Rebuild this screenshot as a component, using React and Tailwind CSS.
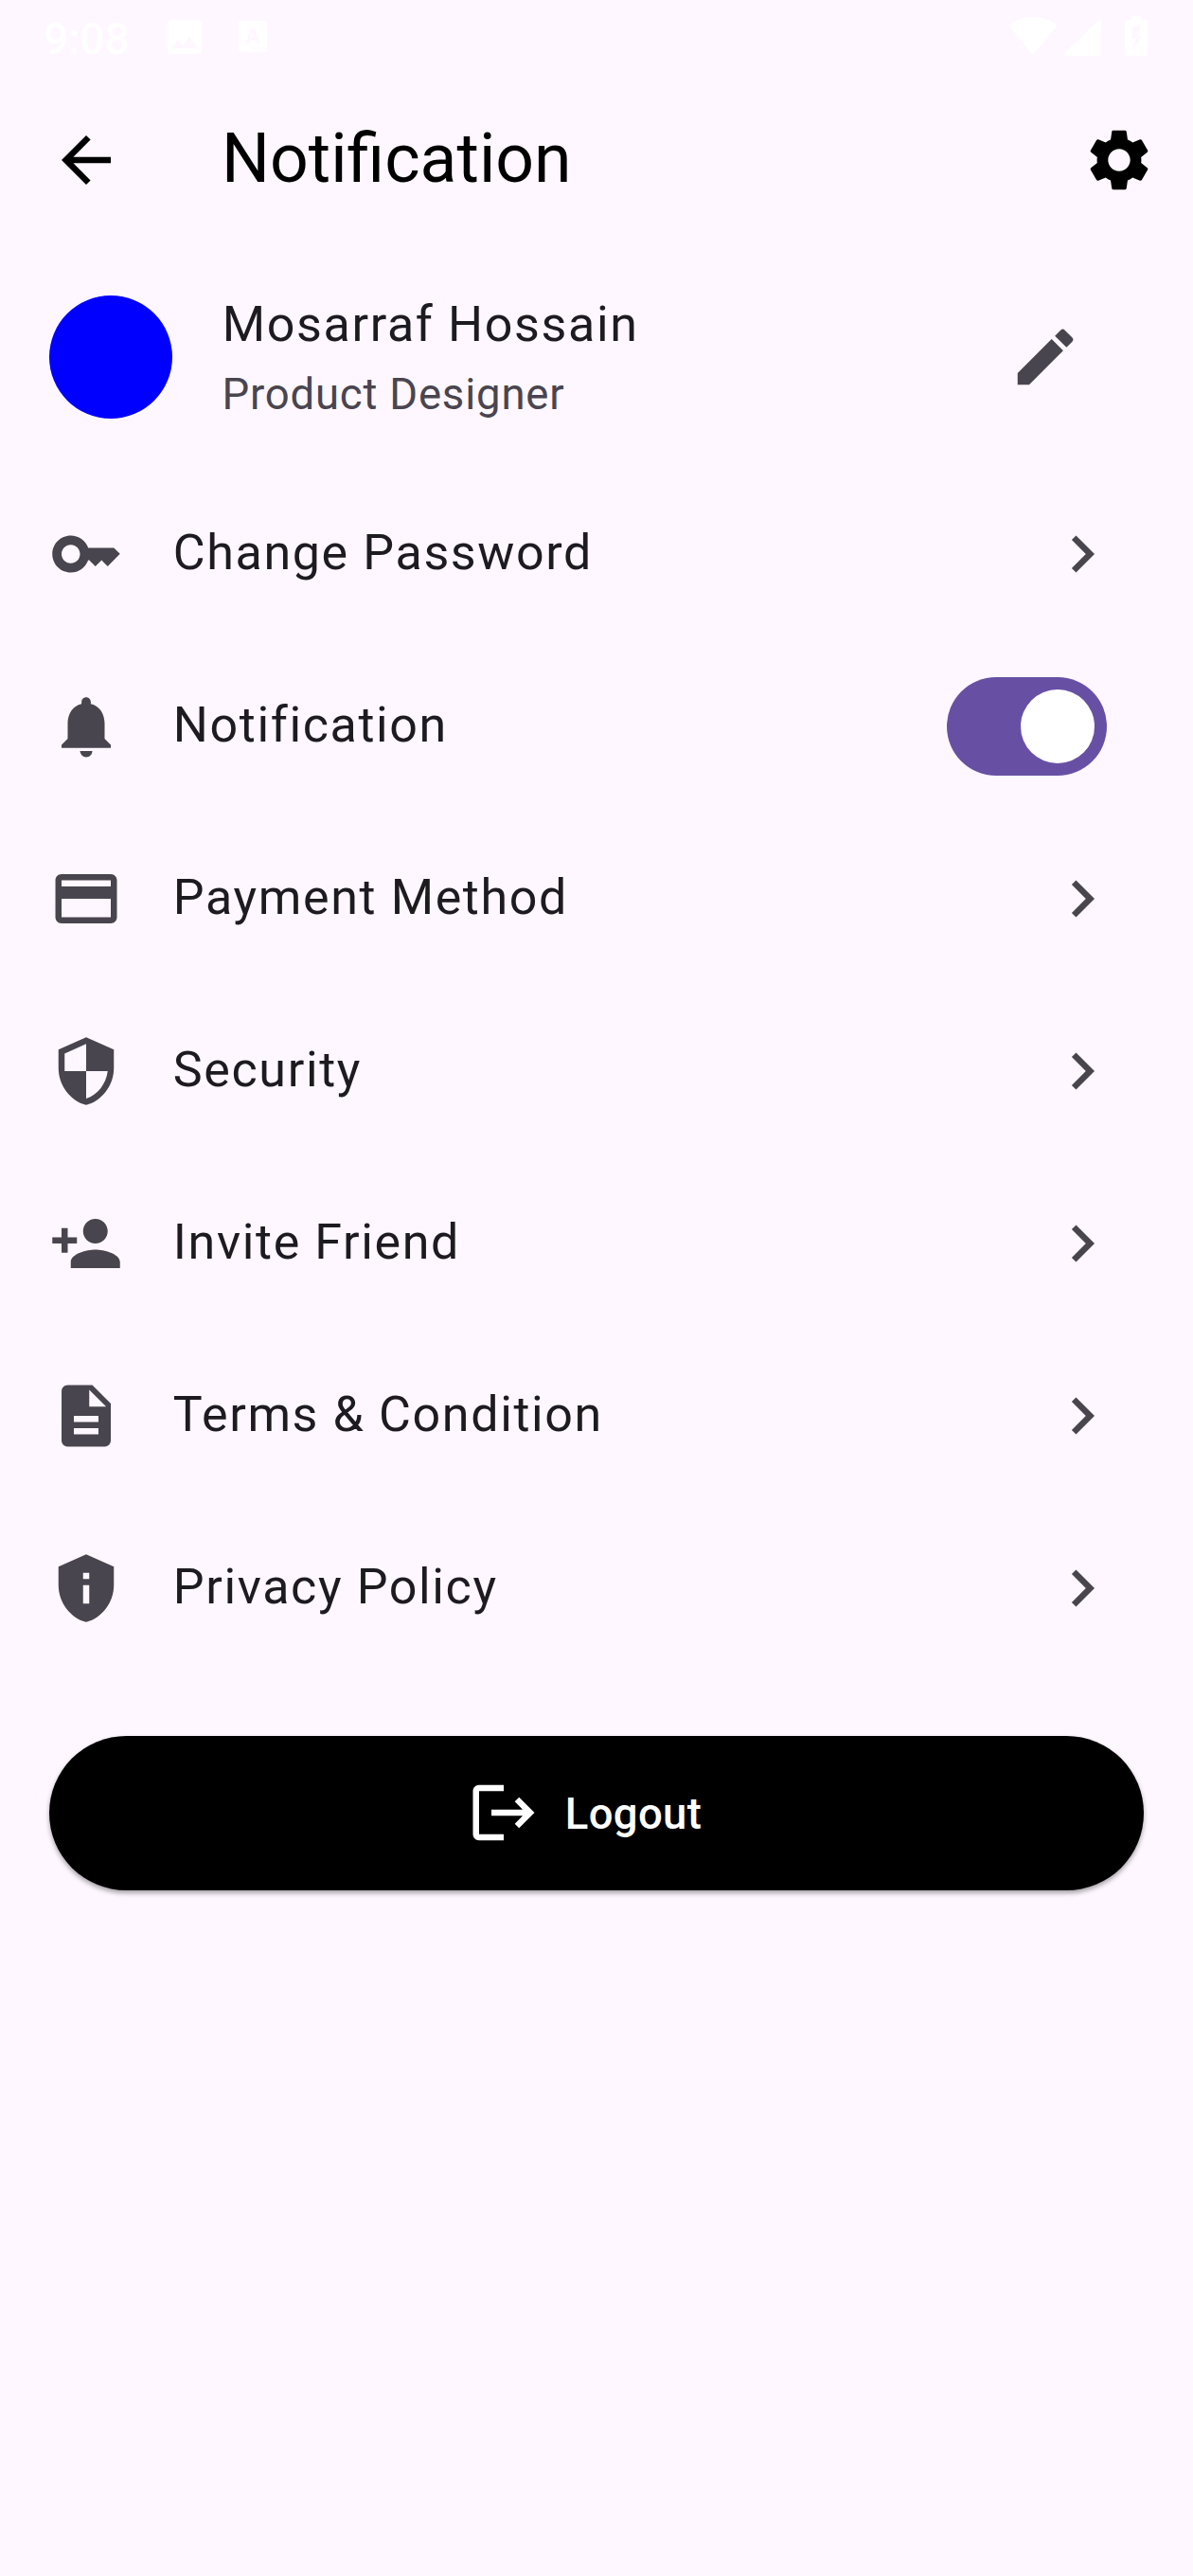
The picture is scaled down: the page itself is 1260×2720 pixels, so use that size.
import React from "react";
import {
  MdArrowBack,
  MdChevronRight,
  MdDescription,
  MdEdit,
  MdImage,
  MdKey,
  MdLogout,
  MdNotifications,
  MdPayment,
  MdPersonAdd,
  MdPrivacyTip,
  MdSecurity,
  MdSettings,
} from "react-icons/md";

const items = [
  { label: "Change Password", icon: MdKey },
  { label: "Notification", icon: MdNotifications, toggle: true },
  { label: "Payment Method", icon: MdPayment },
  { label: "Security", icon: MdSecurity },
  { label: "Invite Friend", icon: MdPersonAdd },
  { label: "Terms & Condition", icon: MdDescription },
  { label: "Privacy Policy", icon: MdPrivacyTip },
];

function StatusBar() {
  return (
    <div className="flex h-[78px] items-start justify-between pl-[46px] pr-[48px] text-white">
      <div className="flex">
        <span className="mt-[14px] w-[125px] text-[46px] leading-[54px] font-medium">9:08</span>
        <MdImage className="mt-[15px] size-[48px]" />
        <svg className="mt-[22px] ml-[33px] h-[33px] w-[30px]" viewBox="0 0 30 33" fill="currentColor">
          <path
            fillRule="evenodd"
            d="M3 0h24a3 3 0 0 1 3 3v27a3 3 0 0 1-3 3H3a3 3 0 0 1-3-3V3a3 3 0 0 1 3-3zM13 8 7.500 24h3.300l1.100-3.500h6.200l1.100 3.500h3.300L17 8zm2 3.600 2.100 6.200h-4.200zM17 28v2h2v-2zm4.500 0v2h2v-2zm4.500 0v2h2v-2z"
          />
        </svg>
      </div>
      <div className="flex">
        <svg className="mt-[18px] h-[40px] w-[50px]" viewBox="0 0 50 40" fill="currentColor">
          <path d="M.8 7.600C7.500 2.800 15.700 0 25 0s17.500 2.800 24.200 7.600c.9.700 1 1.800.3 2.700L26.600 38.600c-.9 1.100-2.300 1.100-3.200 0L.5 10.300c-.7-.9-.6-2 .3-2.700z" />
        </svg>
        <svg className="mt-[21px] ml-[8px] h-[38px] w-[39px]" viewBox="0 0 39 38" fill="currentColor">
          <path d="M39 1.500V38H1.800C.2 38-.5 36.200.6 35.100L35.800.8C37-.4 39 0 39 1.500z" />
        </svg>
        <svg className="mt-[17px] ml-[25px] h-[42px] w-[24px]" viewBox="0 0 24 42" fill="currentColor">
          <path
            fillRule="evenodd"
            d="M7 0h10v4h5a2 2 0 0 1 2 2v34a2 2 0 0 1-2 2H2a2 2 0 0 1-2-2V6a2 2 0 0 1 2-2h5zM8.500 11 7.500 24h4L8 36.500 18.500 21h-5l3.500-10z"
          />
        </svg>
      </div>
    </div>
  );
}

function AppBar() {
  return (
    <header className="flex h-[182px] items-center pl-[52px] pr-[39px] text-black">
      <MdArrowBack className="size-[78px]" />
      <h1 className="ml-[104px] flex-1 pb-[3px] text-[71.5px] leading-[91px]">Notification</h1>
      <MdSettings className="size-[78px]" />
    </header>
  );
}

function Profile() {
  return (
    <section className="flex h-[234px] items-center pl-[52px] pr-[117px]">
      <div className="size-[130px] rounded-full bg-[#0000ff]" />
      <div className="ml-[52px] flex-1">
        <p className="pb-[4px] pl-[0.8px] text-[52px] leading-[74px] tracking-[1.625px] text-[#1d1b20]">Mosarraf Hossain</p>
        <p className="pl-[0.4px] text-[45.5px] leading-[65px] tracking-[0.8125px] text-[#49454f]">Product Designer</p>
      </div>
      <MdEdit className="size-[78px] text-[#49454f]" />
    </section>
  );
}

function Toggle() {
  return (
    <span className="mr-[13px] flex h-[104px] w-[169px] items-center justify-end rounded-full bg-[#6750a4] pr-[13px]">
      <span className="size-[78px] rounded-full bg-white" />
    </span>
  );
}

function SettingRow({ label, icon: Icon, toggle }) {
  return (
    <li className="flex h-[182px] items-center pl-[52px] pr-[78px]">
      <Icon className="size-[78px] text-[#49454f]" />
      <span className="ml-[52.8px] flex-1 pb-[2px] text-[52px] leading-[78px] tracking-[1.625px] text-[#1d1b20]">{label}</span>
      {toggle ? <Toggle /> : <MdChevronRight className="size-[78px] text-[#49454f]" />}
    </li>
  );
}

export default function App() {
  return (
    <main className="flex h-[2720px] w-[1260px] flex-col bg-[#fef7ff] font-[Roboto,sans-serif]">
      <StatusBar />
      <AppBar />
      <Profile />
      <ul>
        {items.map((item) => (
          <SettingRow key={item.label} {...item} />
        ))}
      </ul>
      <button className="mx-[52px] mt-[65px] flex h-[162.5px] items-center justify-center gap-[26px] rounded-full bg-black pl-[52px] pr-[78px] text-white shadow-[0_3px_5px_rgba(0,0,0,0.35)]">
        <MdLogout className="size-[78px]" />
        <span className="pt-[2px] text-[45.5px] leading-[65px] font-medium tracking-[0.325px]">Logout</span>
      </button>
    </main>
  );
}
